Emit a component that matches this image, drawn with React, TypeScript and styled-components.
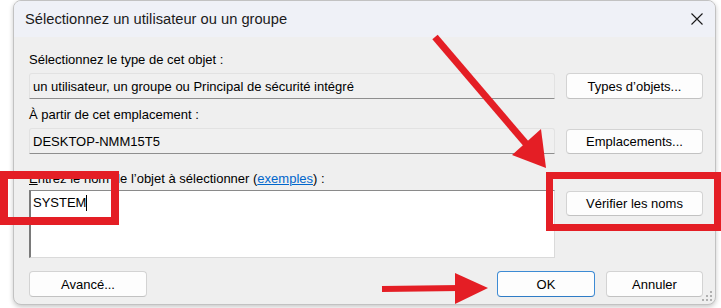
import React from 'react';
import styled, { createGlobalStyle } from 'styled-components';

const GlobalStyle = createGlobalStyle`
  html, body {
    margin: 0;
    background: #ffffff;
  }
  body {
    font-family: "Liberation Sans", Arial, sans-serif;
    color: #000;
  }
`;

const Page = styled.div`
  position: relative;
  width: 721px;
  height: 308px;
  overflow: hidden;
`;

const Window = styled.div`
  position: relative;
  box-sizing: border-box;
  margin-left: 13px;
  width: 703px;
  height: 305px;
  display: flex;
  flex-direction: column;
  background: #efefef;
  border: 1px solid #c2c2c2;
  border-radius: 8px;
  overflow: hidden;
  box-shadow: 0 2px 5px rgba(0, 0, 0, 0.22);
`;

const TitleBar = styled.div`
  height: 36px;
  flex: none;
  display: flex;
  align-items: center;
  justify-content: space-between;
  padding: 0 12px 0 11px;
  background: #eff1f7;
  font-size: 14.7px;
  color: #1b1b1b;
`;

const Body = styled.div`
  flex: 1;
  padding: 15px 12px 0 15px;
  font-size: 13px;
`;

const Label = styled.div<{ $top: number }>`
  height: 16px;
  line-height: 16px;
  margin-top: ${(p) => p.$top}px;
  white-space: nowrap;
`;

const Row = styled.div<{ $top: number }>`
  display: grid;
  grid-template-columns: 1fr 137px;
  column-gap: 11px;
  align-items: start;
  margin-top: ${(p) => p.$top}px;
`;

const ReadField = styled.div`
  box-sizing: border-box;
  height: 26px;
  padding: 0 3px;
  display: flex;
  align-items: center;
  background: #f0f0f0;
  border: 1px solid #e2e2e2;
  border-bottom-color: #8e8e8e;
  border-radius: 3px 3px 0 0;
  white-space: nowrap;
`;

const NameBox = styled.div`
  box-sizing: border-box;
  height: 68px;
  padding: 4px 2px;
  background: #ffffff;
  border: 1px solid #dadada;
  border-top-color: #8a8a8a;
  border-left: 2px solid #7a7a7a;
  line-height: 16px;
  display: flex;
  align-items: flex-start;
`;

const Caret = styled.span`
  display: inline-block;
  width: 1px;
  height: 16px;
  background: #000;
`;

const Button = styled.button<{ $primary?: boolean; $width?: number; $top?: number }>`
  box-sizing: border-box;
  height: ${(p) => (p.$top ? 25 : 26)}px;
  margin-top: ${(p) => p.$top ?? 0}px;
  width: ${(p) => (p.$width ? `${p.$width}px` : '100%')};
  padding: 0;
  font-family: "Liberation Sans", Arial, sans-serif;
  font-size: 13px;
  color: #000;
  background: #fdfdfd;
  border: 1px solid ${(p) => (p.$primary ? '#3d8bd4' : '#d3d3d3')};
  border-bottom-color: ${(p) => (p.$primary ? '#2f7cc6' : '#c2c2c2')};
  border-radius: 4px;
`;

const Footer = styled.div`
  display: flex;
  gap: 11px;
  margin-top: 13px;
`;

const Spacer = styled.div`
  flex: 1;
`;

const Link = styled.span`
  color: #0066cc;
  text-decoration: underline;
`;

const Accel = styled.span`
  text-decoration: underline;
`;

const Grip = styled.svg`
  position: absolute;
  right: 2px;
  bottom: 1px;
`;

const Overlay = styled.svg`
  position: absolute;
  left: 0;
  top: 0;
  pointer-events: none;
`;

const RED = '#e41e25';

const App: React.FC = () => {
  return (
    <Page>
      <GlobalStyle />
      <Window>
        <TitleBar>
          <span>Sélectionnez un utilisateur ou un groupe</span>
          <svg width="12" height="12" viewBox="0 0 12 12">
            <path d="M0.5 0.5 L11.5 11.5 M11.5 0.5 L0.5 11.5" stroke="#1a1a1a" strokeWidth="1.1" fill="none" />
          </svg>
        </TitleBar>
        <Body>
          <Label $top={0}>Sélectionnez le type de cet objet :</Label>
          <Row $top={5}>
            <ReadField>un utilisateur, un groupe ou Principal de sécurité intégré</ReadField>
            <Button>Types d’objets...</Button>
          </Row>

          <Label $top={8}>À partir de cet emplacement :</Label>
          <Row $top={5}>
            <ReadField>DESKTOP-NMM15T5</ReadField>
            <Button $top={1}>Emplacements...</Button>
          </Row>

          <Label $top={17}>
            <Accel>E</Accel>ntrez le nom de l’objet à sélectionner (<Link>exemples</Link>) :
          </Label>
          <Row $top={3}>
            <NameBox>
              SYSTEM
              <Caret />
            </NameBox>
            <Button $top={1}>Vérifier les noms</Button>
          </Row>

          <Footer>
            <Button $width={118}>Avancé...</Button>
            <Spacer />
            <Button $primary $width={98}>OK</Button>
            <Button $width={97}>Annuler</Button>
          </Footer>
        </Body>
        <Grip width="12" height="12" viewBox="0 0 12 12">
          <rect x="9" y="0" width="2" height="2" fill="#b0b0b0" />
          <rect x="5" y="4" width="2" height="2" fill="#b0b0b0" />
          <rect x="9" y="4" width="2" height="2" fill="#b0b0b0" />
          <rect x="1" y="8" width="2" height="2" fill="#b0b0b0" />
          <rect x="5" y="8" width="2" height="2" fill="#b0b0b0" />
          <rect x="9" y="8" width="2" height="2" fill="#b0b0b0" />
        </Grip>
      </Window>

      <Overlay width="721" height="308" viewBox="0 0 721 308">
        <line x1="435" y1="37" x2="528" y2="146" stroke={RED} strokeWidth="7" />
        <polygon points="512,155 541,129 546,168" fill={RED} />
        <rect x="4" y="175" width="111" height="46" fill="none" stroke={RED} strokeWidth="8" />
        <rect x="549.5" y="175.5" width="168" height="52" fill="none" stroke={RED} strokeWidth="7" />
        <line x1="382" y1="289" x2="460" y2="288" stroke={RED} strokeWidth="6" />
        <polygon points="455,273 455,304 488,288" fill={RED} />
      </Overlay>
    </Page>
  );
};

export default App;
